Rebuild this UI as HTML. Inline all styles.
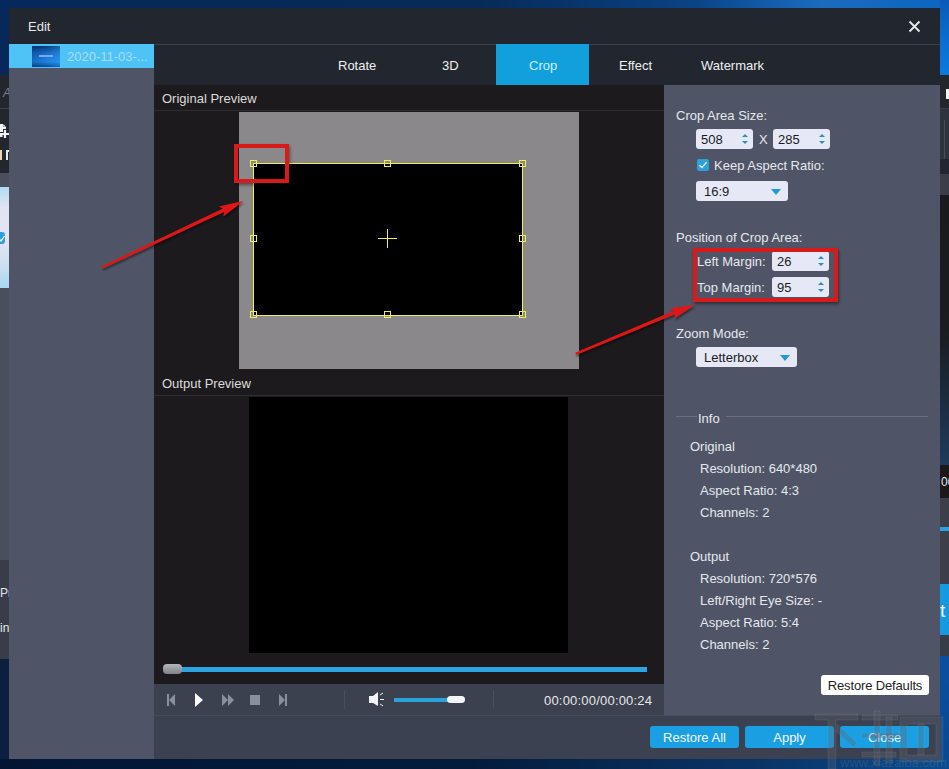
<!DOCTYPE html>
<html><head><meta charset="utf-8">
<style>
*{margin:0;padding:0;box-sizing:border-box}
html,body{width:949px;height:769px;overflow:hidden}
body{position:relative;font-family:"Liberation Sans",sans-serif;background:#0b2448;}
.a{position:absolute}
.t{position:absolute;white-space:nowrap;line-height:1}

.sp{background:#e6e9f5;border-radius:3px}
.sp span{position:absolute;left:5px;top:4px;font-size:13px;line-height:1;color:#1a1a24}
.sp:after{content:"";position:absolute;right:5px;top:5px;width:0;height:0;border-left:3px solid transparent;border-right:3px solid transparent;border-bottom:3px solid #2a8fbf}
.sp:before{content:"";position:absolute;right:5px;top:12px;width:0;height:0;border-left:3px solid transparent;border-right:3px solid transparent;border-top:3px solid #2a8fbf}
.dd{background:#e6e9f5;border-radius:3px}
.dd span{position:absolute;left:8px;top:4px;font-size:13px;line-height:1;color:#1a1a24}
.dd:after{content:"";position:absolute;right:7px;top:8px;width:0;height:0;border-left:5px solid transparent;border-right:5px solid transparent;border-top:6px solid #1b9cd4}
.info{font-size:13px;color:#e6e8ee}
.btnw{background:#fff;border-radius:3px;color:#222;font-size:13px;letter-spacing:-0.15px;line-height:20px;padding-top:1px;text-align:center;white-space:nowrap}
.btnb{background:#1aa0e2;border-radius:3px;color:#f4f8ff;font-size:13px;line-height:22px;padding-top:1px;text-align:center;white-space:nowrap}
</style></head><body>
<!-- desktop background -->
<div class="a" style="left:0;top:0;width:949px;height:769px;background:linear-gradient(90deg,#07285a 0%,#072a58 50%,#0a3f7e 70%,#0a58aa 85%,#0b66c0 100%)"></div>
<div class="a" style="left:700px;top:0;width:249px;height:8px;background:linear-gradient(90deg,rgba(80,160,240,0) 0%,rgba(80,160,240,.25) 50%,rgba(80,160,240,0) 100%)"></div>
<div class="a" style="left:0;top:659px;width:9px;height:110px;background:#0b1f40"></div>
<div class="a" style="left:0;top:759px;width:949px;height:10px;background:linear-gradient(90deg,#021634 0%,#041c3c 50%,#0a3466 80%,#0a4c90 100%)"></div>
<!-- left app fragment -->
<div class="a" style="left:0;top:75px;width:9px;height:98px;background:#23262d"></div>
<div class="a" style="left:0;top:108px;width:9px;height:1px;background:#3c3f47"></div>
<div class="t" style="left:3px;top:87px;font-size:12px;font-style:italic;color:#7d8088">A</div>
<svg class="a" style="left:0;top:123px" width="9" height="16"><path d="M0 1H3V4H6V6H3V9H0Z" fill="#f2f2f2"/><path d="M3.3 1L6 3.7H3.3Z" fill="#f2f2f2"/><path d="M0 10H2.5V14H0Z" fill="#f2f2f2"/><path d="M1 11H9M5 7V15" stroke="#f2f2f2" stroke-width="2.2"/></svg>
<div class="a" style="left:0;top:150px;width:1.5px;height:10px;background:#f0d2b4"></div>
<div class="a" style="left:6px;top:150px;width:2px;height:10px;background:#e8e8e8"></div>
<div class="a" style="left:6px;top:150px;width:3px;height:2px;background:#e8e8e8"></div>
<div class="a" style="left:0;top:173px;width:9px;height:486px;background:#4a4f5e"></div>
<div class="a" style="left:0;top:187px;width:9px;height:101px;background:linear-gradient(180deg,#b0dcf4 0%,#dfe3f3 20%,#e2e4f3 55%,#c8dff0 80%,#a6d8f4 100%)"></div>
<div class="a" style="left:0;top:232px;width:5px;height:12px;background:#2a9ee0;border-radius:0 3px 3px 0"></div><svg class="a" style="left:0;top:232px" width="5" height="12"><path d="M-1 7L1 9L4.5 4" fill="none" stroke="#fff" stroke-width="1.3"/></svg>
<div class="a" style="left:0;top:560px;width:9px;height:99px;background:#393d4a"></div>
<div class="t" style="left:0;top:587px;font-size:12px;color:#e4e4e8">Pr</div>
<div class="t" style="left:0;top:622px;font-size:12px;color:#e4e4e8">in</div>
<!-- right app fragment -->
<div class="a" style="left:940px;top:0;width:9px;height:75px;background:linear-gradient(180deg,#0a5ab6 0%,#0a6cd0 50%,#0a7ade 100%)"></div>
<div class="a" style="left:940px;top:75px;width:9px;height:33px;background:#23262d"></div>
<div class="a" style="left:946px;top:89px;width:3px;height:10px;background:#f0f0f0"></div>
<div class="a" style="left:940px;top:108px;width:9px;height:1px;background:#3a3d45"></div>
<div class="a" style="left:940px;top:109px;width:9px;height:50px;background:#2f333e"></div>
<div class="a" style="left:944px;top:120px;width:1px;height:39px;background:#4a4e5a"></div>
<div class="a" style="left:940px;top:159px;width:9px;height:15px;background:#232632"></div>
<div class="a" style="left:940px;top:174px;width:9px;height:21px;background:#3b3e48"></div>
<div class="a" style="left:940px;top:195px;width:9px;height:270px;background:linear-gradient(180deg,#1a1a1c 0%,#1a1c20 50%,#1f3a5c 100%)"></div>
<div class="a" style="left:940px;top:465px;width:9px;height:33px;background:#1a1819"></div>
<div class="t" style="left:941px;top:476px;font-size:12px;color:#e8e8e8">00</div>
<div class="a" style="left:940px;top:498px;width:9px;height:29px;background:#3c3f4a"></div>
<div class="a" style="left:940px;top:527px;width:9px;height:4px;background:#2ba3e0"></div>
<div class="a" style="left:940px;top:531px;width:9px;height:53px;background:#3c3f4a"></div>
<div class="a" style="left:940px;top:584px;width:9px;height:51px;background:#139ae0"></div>
<div class="t" style="left:940px;top:601px;font-size:19px;color:#f4f8ff">t</div>
<div class="a" style="left:940px;top:635px;width:9px;height:21px;background:#383c48"></div>
<div class="a" style="left:940px;top:656px;width:9px;height:103px;background:linear-gradient(180deg,#0a50a0,#0a4890)"></div>
<!-- dialog base -->
<div class="a" style="left:9px;top:8px;width:931px;height:751px;background:#3b4150"></div>
<!-- title bar -->
<div class="a" style="left:9px;top:8px;width:931px;height:36px;background:#22262e"></div>
<div class="t" id="t_edit" style="left:28px;top:20px;font-size:13px;color:#e8e8e8">Edit</div>
<svg class="a" style="left:908px;top:20px" width="13" height="13"><path d="M1.5 1.5L11.5 11.5M11.5 1.5L1.5 11.5" stroke="#e4e6ea" stroke-width="1.9"/></svg>
<div class="a" style="left:9px;top:44px;width:931px;height:1px;background:#3a3f48"></div>
<!-- sidebar -->
<div class="a" style="left:9px;top:45px;width:145px;height:714px;background:#4f5566"></div>
<div class="a" style="left:9px;top:44px;width:145px;height:24px;background:#4fc3f5"></div>
<div class="a" style="left:32px;top:46px;width:28px;height:21px;background:linear-gradient(180deg,#073a78 0%,#1466c0 30%,#1a78d8 55%,#1c84e0 75%,#0a4a96 100%)"></div>
<div class="a" style="left:32px;top:46px;width:28px;height:21px;background:linear-gradient(90deg,rgba(0,30,80,.25),rgba(40,160,255,0) 50%,rgba(60,170,255,.35))"></div>
<div class="a" style="left:39px;top:55px;width:14px;height:2px;background:#7aa8e8"></div>
<div class="t" id="t_file" style="left:67px;top:50px;font-size:13px;color:#aadcf6">2020-11-03-...</div>
<!-- tab bar -->
<div class="a" style="left:154px;top:45px;width:786px;height:40px;background:#22262e"></div>
<div class="a" style="left:496px;top:44px;width:93px;height:41px;background:#12a0dc"></div>
<div class="t" id="t_rot" style="left:338px;top:59px;font-size:13px;color:#f0f0f0">Rotate</div>
<div class="t" id="t_3d" style="left:442px;top:59px;font-size:13px;color:#f0f0f0">3D</div>
<div class="t" id="t_crop" style="left:529px;top:59px;font-size:13px;color:#cdf2ff">Crop</div>
<div class="t" id="t_eff" style="left:619px;top:59px;font-size:13px;color:#f0f0f0">Effect</div>
<div class="t" id="t_wm" style="left:701px;top:59px;font-size:13px;color:#f0f0f0">Watermark</div>
<!-- preview area -->
<div class="a" style="left:154px;top:85px;width:510px;height:599px;background:#1c1a1d"></div>
<div class="t" id="t_op" style="left:162px;top:92px;font-size:13px;color:#dcdcdc">Original Preview</div>
<div class="a" style="left:154px;top:110px;width:510px;height:1px;background:#2e2d31"></div>
<div class="a" style="left:239px;top:112px;width:340px;height:257px;background:#8a888b"></div>
<div class="t" id="t_outp" style="left:162px;top:377px;font-size:13px;color:#dcdcdc">Output Preview</div>
<div class="a" style="left:154px;top:395px;width:510px;height:1px;background:#2e2d31"></div>
<div class="a" style="left:249px;top:397px;width:319px;height:256px;background:#000"></div>

<!-- crop overlay -->
<div class="a" style="left:253px;top:163px;width:270px;height:153px;background:#000;border:1px solid #eeee58"></div>
<svg class="a" style="left:239px;top:112px" width="340" height="257">
 <g fill="none" stroke="#eeee58" stroke-width="1">
  <rect x="11.5" y="48.5" width="6" height="6"/>
  <rect x="145.5" y="48.5" width="6" height="6"/>
  <rect x="280.5" y="48.5" width="6" height="6"/>
  <rect x="11.5" y="123.5" width="6" height="6"/>
  <rect x="280.5" y="123.5" width="6" height="6"/>
  <rect x="11.5" y="199.5" width="6" height="6"/>
  <rect x="145.5" y="199.5" width="6" height="6"/>
  <rect x="280.5" y="199.5" width="6" height="6"/>
  <path d="M148.5 117V136M139 126.5H158"/>
 </g>
</svg>
<!-- red box 1 -->
<div class="a" style="left:234px;top:144px;width:55px;height:39px;border:4px solid #d81a1a;box-shadow:1px 2px 3px rgba(0,0,0,.45)"></div>

<!-- slider -->
<div class="a" style="left:172px;top:667px;width:475px;height:5px;background:#2fa4e0"></div>
<div class="a" style="left:163px;top:664px;width:19px;height:10px;border-radius:4px;background:linear-gradient(180deg,#b4b6bc,#7f828a)"></div>
<!-- control bar -->
<div class="a" style="left:154px;top:684px;width:510px;height:31px;background:#3c4150"></div>
<div class="a" style="left:154px;top:715px;width:786px;height:1px;background:#474c5a"></div>
<div class="t" id="t_time" style="left:544px;top:694px;font-size:13px;letter-spacing:0.2px;color:#e8e8e8">00:00:00/00:00:24</div>
<!-- right panel -->
<div class="a" style="left:664px;top:85px;width:276px;height:630px;background:#4f5566"></div>

<!-- player controls -->
<svg class="a" style="left:154px;top:684px" width="510" height="31">
 <g fill="#8a8f9b">
  <rect x="13" y="10" width="2" height="12"/><path d="M21 10V22L15 16Z"/>
  <path d="M68 10V22L74 16ZM74 10V22L80 16Z"/>
  <rect x="96" y="11" width="10" height="10"/>
  <path d="M125 10V22L131 16Z"/><rect x="131" y="10" width="2" height="12"/>
 </g>
 <path d="M41 9V23L49 16Z" fill="#ffffff"/>
 <rect x="190" y="6" width="1" height="19" fill="#4a4f5c"/>
 <g fill="#f4f4f4"><rect x="215" y="12" width="4" height="7"/><path d="M219 12L224 8V22L219 19Z"/></g>
 <g stroke="#f4f4f4" stroke-width="1"><path d="M226 11L229 9M226 15.5H230M226 20L229 22"/></g>
 <rect x="240" y="14" width="56" height="4" fill="#29a3dc"/>
 <rect x="293" y="12" width="18" height="7" rx="3.5" fill="#f4f5f7"/>
 <rect x="339" y="6" width="1" height="19" fill="#4a4f5c"/>
</svg>
<!-- right panel content -->
<div class="t" id="t_cas" style="left:676px;top:109px;font-size:13px;color:#e6e8ee">Crop Area Size:</div>
<div class="a sp" style="left:696px;top:129px;width:57px;height:20px"><span>508</span></div>
<div class="t" style="left:759px;top:133px;font-size:13px;color:#e6e8ee">X</div>
<div class="a sp" style="left:773px;top:129px;width:57px;height:20px"><span>285</span></div>
<div class="a" style="left:697px;top:159px;width:12px;height:12px;background:#2d9fd9;border-radius:2px"></div>
<svg class="a" style="left:697px;top:159px" width="12" height="12"><path d="M2.4 6.2L4.9 8.6L9.6 3.3" fill="none" stroke="#e6faff" stroke-width="1.35"/></svg>
<div class="t" id="t_kar" style="left:714px;top:159px;font-size:13px;color:#e6e8ee">Keep Aspect Ratio:</div>
<div class="a dd" style="left:696px;top:181px;width:92px;height:20px"><span>16:9</span></div>
<div class="t" id="t_pca" style="left:676px;top:231px;font-size:13px;color:#e6e8ee">Position of Crop Area:</div>
<div class="t" id="t_lm" style="left:697px;top:255px;font-size:13px;color:#e6e8ee">Left Margin:</div>
<div class="a sp" style="left:772px;top:251px;width:57px;height:20px"><span>26</span></div>
<div class="t" id="t_tm" style="left:697px;top:281px;font-size:13px;color:#e6e8ee">Top Margin:</div>
<div class="a sp" style="left:772px;top:277px;width:57px;height:20px"><span>95</span></div>
<div class="a" style="left:693px;top:248px;width:145px;height:54px;border:4px solid #d81a1a;box-shadow:1px 2px 3px rgba(0,0,0,.45)"></div>
<div class="t" id="t_zm" style="left:676px;top:327px;font-size:13px;color:#e6e8ee">Zoom Mode:</div>
<div class="a dd" style="left:696px;top:347px;width:101px;height:20px"><span>Letterbox</span></div>
<div class="a" style="left:676px;top:416px;width:21px;height:1px;background:#6a7080"></div>
<div class="a" style="left:726px;top:416px;width:202px;height:1px;background:#6a7080"></div>
<div class="t" id="t_info" style="left:698px;top:412px;font-size:13px;color:#e6e8ee">Info</div>
<div class="t" id="t_orig" style="left:690px;top:440px;font-size:13px;color:#e6e8ee">Original</div>
<div class="t info" style="left:700px;top:462px">Resolution: 640*480</div>
<div class="t info" style="left:700px;top:484px">Aspect Ratio: 4:3</div>
<div class="t info" style="left:700px;top:506px">Channels: 2</div>
<div class="t" id="t_outh" style="left:690px;top:550px;font-size:13px;color:#e6e8ee">Output</div>
<div class="t info" style="left:700px;top:572px">Resolution: 720*576</div>
<div class="t info" style="left:700px;top:594px">Left/Right Eye Size: -</div>
<div class="t info" style="left:700px;top:616px">Aspect Ratio: 5:4</div>
<div class="t info" style="left:700px;top:638px">Channels: 2</div>
<div class="a btnw" style="left:821px;top:675px;width:108px;height:20px">Restore Defaults</div>
<!-- bottom buttons -->
<div class="a btnb" style="left:650px;top:726px;width:89px;height:22px">Restore All</div>
<div class="a btnb" style="left:745px;top:726px;width:89px;height:22px">Apply</div>
<div class="a btnb" style="left:840px;top:726px;width:89px;height:22px">Close</div>

<!-- watermark -->
<svg class="a" style="left:810px;top:705px" width="139" height="64">
 <g fill="rgba(95,98,112,0.32)" stroke="rgba(190,195,210,0.10)" stroke-width="1">
  <path d="M5 9H48V15H26V64H18V15H5Z"/>
  <path d="M27 19L47 38L43 42L27 27Z"/>
  <path d="M52 10H88V15H52Z"/>
  <path d="M64 6H70V60H64Z"/>
  <path d="M52 28H90V33H52Z"/>
  <path d="M52 47H86V52H52Z"/>
  <path d="M76 12H82V58H76Z"/>
  <path d="M90 12H133V57H90ZM97 19V50H126V19Z"/>
  <path d="M108 19H114V50H108Z"/>
 </g>
 <text x="30" y="62" font-family="Liberation Sans" font-size="13" fill="rgba(120,130,150,0.28)">www.xiazaiba.com</text>
</svg>
<!-- arrows -->
<svg class="a" style="left:0;top:0" width="949" height="769">
 <defs><filter id="sh" x="-20%" y="-20%" width="140%" height="140%"><feGaussianBlur in="SourceAlpha" stdDeviation="1.2"/><feOffset dx="1" dy="2"/><feComponentTransfer><feFuncA type="linear" slope="0.5"/></feComponentTransfer><feMerge><feMergeNode/><feMergeNode in="SourceGraphic"/></feMerge></filter></defs>
 <g filter="url(#sh)" fill="#e01818">
  <path d="M102.5 265.9 L223 208.6 L218.7 206.6 L243.4 201 L223.3 216.4 L224.4 211.8 L103.5 268.1 Z"/><circle cx="103" cy="267" r="1.3"/>
  <path d="M576.3 352.2 L674 310.8 L669.8 308.4 L694.8 304.75 L674.1 318.8 L675.4 314.1 L577.3 354.6 Z"/><circle cx="576.8" cy="353.4" r="1.3"/>
 </g>
</svg>
</body></html>
